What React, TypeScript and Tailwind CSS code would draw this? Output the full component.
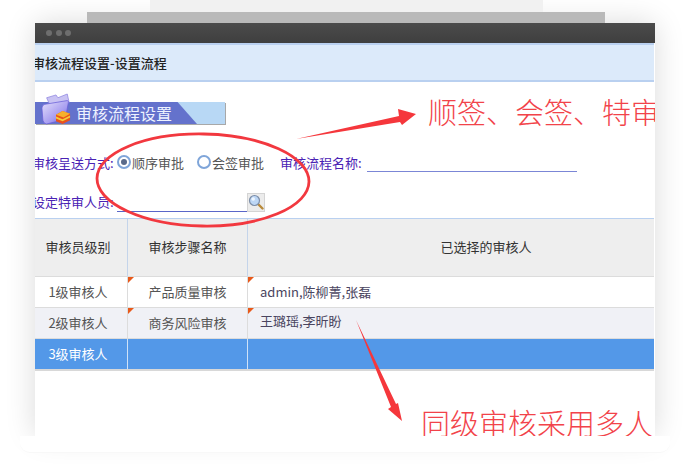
const FONT = "font-['Noto_Sans_CJK_SC','Noto_Sans',sans-serif]";

const Radio = ({ checked }: { checked?: boolean }) => (
  <span className="flex h-[14px] w-[14px] items-center justify-center rounded-full border-2 border-[#7fa5d9] bg-white">
    {checked && <span className="h-[6px] w-[6px] rounded-full bg-[#5a6a8a]" />}
  </span>
);

const Flag = () => (
  <span className="absolute left-0 top-0 h-0 w-0 border-l-[6px] border-t-[6px] border-l-[#e8591a] border-t-[#e8591a] border-r-[6px] border-b-[6px] border-r-transparent border-b-transparent scale-x-50 scale-y-50 origin-top-left" />
);

const FolderIcon = () => (
  <svg width="30" height="32" viewBox="0 0 32 34" className="absolute left-[6px] top-[-9px]">
    <defs>
      <linearGradient id="folder" x1="0" y1="0" x2="1" y2="1">
        <stop offset="0" stopColor="#e6e2fb" />
        <stop offset="0.6" stopColor="#a79cf0" />
        <stop offset="1" stopColor="#5b50d0" />
      </linearGradient>
    </defs>
    <path d="M6 5 L16 2 L18 5 L28 1 L30 10 L10 14 Z" fill="#c9c3f3" stroke="#8f86e0" strokeWidth="0.8" />
    <path d="M4 12 L28 8 Q30 8 29 11 L26 28 L6 33 Q3 33 2 29 L1 16 Q1 13 4 12 Z" fill="url(#folder)" stroke="#6a5fd8" strokeWidth="0.8" />
    <path d="M16 23 L23 19 L31 22 L31 29 L23 33 L16 30 Z" fill="#e9511d" />
    <path d="M16 23 L23 19 L31 22 L24 26 Z" fill="#f6b02c" />
    <path d="M16 25 L23 28 L31 24 L31 26 L23 30 L16 27 Z" fill="#f3cb3a" />
  </svg>
);

const SearchIcon = () => (
  <svg width="16" height="16" viewBox="0 0 16 16">
    <line x1="9.5" y1="9.5" x2="14.5" y2="14.5" stroke="#b98a3a" strokeWidth="2.4" strokeLinecap="round" />
    <circle cx="6.5" cy="6.5" r="5" fill="#bcd6f5" stroke="#7d8ea8" strokeWidth="1.2" />
    <circle cx="5.2" cy="5" r="1.8" fill="#eef6ff" />
  </svg>
);

const rows = [
  { level: "1级审核人", step: "产品质量审核", people: "admin,陈柳菁,张磊", bg: "bg-white", pb: "pb-[2px]" },
  { level: "2级审核人", step: "商务风险审核", people: "王璐瑶,李昕盼", bg: "bg-[#f0f1f6]", pb: "pb-[5px]" },
];

export default function App() {
  return (
    <div className={`relative flex h-[475px] w-[690px] flex-col items-start overflow-hidden bg-white ${FONT}`}>
      {/* Window shadow */}
      <div className="absolute left-[35px] top-[23px] h-[413px] w-[620px] rounded-[6px] shadow-[0_0_30px_rgba(0,0,0,0.15)]" />

      <div className="relative ml-[150px] h-[12px] w-[393px] bg-[#f1f1f1]" />
      <div className="relative ml-[87px] h-[11px] w-[518px] bg-[#b9b9b9]" />

      <div className="relative ml-[35px] h-[413px] w-[620px] overflow-hidden bg-white">
        {/* Title bar */}
        <div className="flex h-[20px] items-center gap-[3.5px] bg-gradient-to-b from-[#4b4b4b] to-[#3f3f3f] pl-[11px]">
          <span className="h-[6px] w-[6px] rounded-full bg-[#6e6e6e]" />
          <span className="h-[6px] w-[6px] rounded-full bg-[#6e6e6e]" />
          <span className="h-[6px] w-[6px] rounded-full bg-[#6e6e6e]" />
        </div>

        {/* Page title */}
        <div className="flex h-[39px] w-[619px] items-center border-y-2 border-[#b9d0f0] bg-[#dceafa]">
          <span className="ml-[-3px] text-[13px] font-medium text-[#222]">审核流程设置-设置流程</span>
        </div>

        {/* Section banner */}
        <div className="relative mt-[20px] flex h-[22px] w-[190px] items-center bg-[#b8d8f5] shadow-[1px_1px_0_#a8a8a8]">
          <div className="absolute inset-y-0 left-0 w-[162px] bg-[#6472cc] [clip-path:polygon(0_0,88%_0,100%_100%,0_100%)]" />
          <FolderIcon />
          <span className="relative ml-[41px] text-[16px] leading-none text-[#eef2ff]">审核流程设置</span>
        </div>

        {/* Form */}
        <div className="mt-[29px] flex h-[18px] items-center text-[13px] leading-none text-[#4a22b4]">
          <span className="ml-[-3px] w-[85px]">审核呈送方式:</span>
          <Radio checked />
          <span className="ml-[1px] w-[65px] text-[#555]">顺序审批</span>
          <Radio />
          <span className="ml-[1px] w-[68px] text-[#555]">会签审批</span>
          <span className="w-[87px]">审核流程名称:</span>
          <span className="mt-[18px] h-px w-[210px] bg-[#7b86d6]" />
        </div>
        <div className="mt-[21px] flex h-[20px] items-center text-[13px] leading-none text-[#4a22b4]">
          <span className="mb-[2px] ml-[-3px] w-[85px] shrink-0">设定特审人员:</span>
          <span className="mt-[18px] h-px w-[130px] bg-[#5a66c8]" />
          <span className="flex h-[19px] w-[18px] items-center justify-center border border-[#d4d4d4] bg-[#ececec]">
            <SearchIcon />
          </span>
        </div>

        {/* Table */}
        <div className="mt-[6px] w-[619px] text-[13px] leading-none">
          <div className="grid h-[59px] grid-cols-[92px_120px_1fr] border-y border-t-[#b9d0f0] border-b-[#dcdcdc] bg-[#eeeeee] text-[#333]">
            <div className="flex items-center justify-center pb-[2px] pr-[6px]">审核员级别</div>
            <div className="flex items-center justify-center border-l border-[#c4d4ea] pb-[2px]">审核步骤名称</div>
            <div className="flex items-center justify-center border-l border-[#c4d4ea] pb-[2px] pl-[70px]">已选择的审核人</div>
          </div>
          {rows.map((r) => (
            <div key={r.level} className={`grid h-[31px] grid-cols-[92px_120px_1fr] border-b border-[#dcdcdc] ${r.bg} text-[#555]`}>
              <div className="flex items-center justify-center pb-[2px] pr-[6px]">{r.level}</div>
              <div className="relative flex items-center justify-center border-l border-[#dcdcdc] pb-[2px]">
                <Flag />
                {r.step}
              </div>
              <div className={`relative flex items-center border-l border-[#dcdcdc] pl-[12px] ${r.pb}`}>
                <Flag />
                <span className="text-[#4a4560]">{r.people}</span>
              </div>
            </div>
          ))}
          <div className="grid h-[32px] grid-cols-[92px_120px_1fr] border-b-2 border-[#d8d8d8] bg-[#5398e8] text-white">
            <div className="flex items-center justify-center pb-[2px] pr-[6px]">3级审核人</div>
            <div className="border-l border-[#cfe2f8]" />
            <div className="border-l border-[#cfe2f8]" />
          </div>
        </div>

        {/* Annotations */}
        <div className="absolute left-[393px] top-[74px] whitespace-nowrap text-[29px] font-light leading-none text-[#f2434a]">
          顺签、会签、特审
        </div>
        <div className="absolute left-[386px] top-[385px] whitespace-nowrap text-[29px] font-light leading-none text-[#f2434a]">
          同级审核采用多人
        </div>
      </div>

      <div className="relative ml-[20px] h-[17px] w-[650px] rounded-b-[10px] border-b border-[#f8f8f8] bg-white" />

      {/* Hand-drawn markup */}
      <svg width="690" height="475" viewBox="0 0 690 475" className="pointer-events-none absolute left-0 top-0">
        <ellipse cx="203" cy="180" rx="106" ry="46" fill="none" stroke="#f2383f" strokeWidth="2.8" transform="rotate(1 203 180)" />
        <path d="M296 139 L399 116 L398 109 L416 114 L402 125 L400 122 Z" fill="#f5373c" />
        <path d="M356 320 L396 404 L398 403 L402 421 L388 409 L391 407 Z" fill="#f5373c" />
      </svg>
    </div>
  );
}
